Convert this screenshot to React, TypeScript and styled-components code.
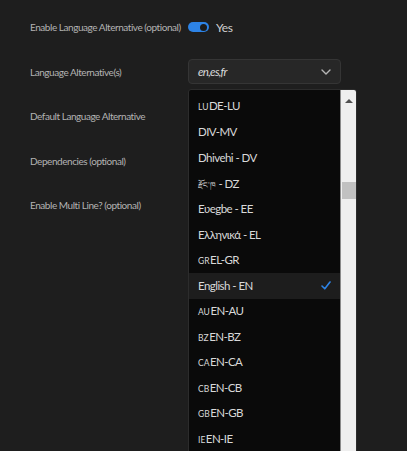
import React from "react";
import styled, { createGlobalStyle } from "styled-components";

const Global = createGlobalStyle`
  html, body { margin: 0; padding: 0; background: #1e1e1e; }
  body { font-family: "Lato", "Noto Sans", sans-serif; width: 407px; height: 451px; overflow: hidden; }
`;

const Page = styled.div`
  position: relative;
  width: 407px;
  height: 451px;
  background: #1e1e1e;
  padding: 5px 0 0 30px;
  box-sizing: border-box;
`;

const Row = styled.div`
  display: grid;
  grid-template-columns: 158px 153px;
  align-items: center;
  height: 44.5px;
`;

const Label = styled.div`
  font-size: 10px;
  color: #b3b3b3;
  letter-spacing: -0.45px;
  white-space: nowrap;
`;

const ToggleWrap = styled.div`
  display: flex;
  align-items: center;
  gap: 7px;
`;

const Track = styled.div`
  width: 21px;
  height: 10px;
  border-radius: 5px;
  background: #2d83e6;
  display: flex;
  align-items: center;
  justify-content: flex-end;
  padding: 0 2px;
  box-sizing: border-box;
`;

const Knob = styled.div`
  width: 7px;
  height: 7px;
  border-radius: 50%;
  background: #1b1b1b;
`;

const ToggleText = styled.span`
  font-size: 12px;
  color: #cfcfcf;
  letter-spacing: -0.4px;
`;

const Select = styled.div`
  height: 25px;
  box-sizing: border-box;
  border: 1px solid #353535;
  background: #272727;
  border-radius: 4px;
  display: flex;
  align-items: center;
  justify-content: space-between;
  padding: 0 9px 0 9px;
`;

const SelectValue = styled.span`
  font-size: 11.5px;
  font-style: italic;
  color: #dcdcdc;
  letter-spacing: -0.7px;
`;

const Menu = styled.div`
  position: absolute;
  left: 188px;
  top: 89px;
  width: 169px;
  height: 380px;
  background: #0a0a0a;
  border: 1px solid #2c2c2c;
  border-radius: 3px 3px 0 0;
  box-sizing: border-box;
  display: flex;
  overflow: hidden;
`;

const List = styled.div`
  flex: 1;
  padding-top: 4px;
`;

const Item = styled.div<{ $active?: boolean }>`
  height: 25.6px;
  display: flex;
  align-items: center;
  justify-content: space-between;
  padding: 0 9px 0 9px;
  background: ${(p) => (p.$active ? "#1d1d1d" : "transparent")};
  font-size: 11.5px;
  line-height: 16px;
  color: #d9d9d9;
  letter-spacing: -0.55px;
  white-space: nowrap;
  overflow: hidden;
`;

const Prefix = styled.span`
  font-size: 8.5px;
  letter-spacing: 0;
  margin-right: 0.5px;
`;

const Script = styled.span`
  font-size: 8px;
  line-height: 10px;
  letter-spacing: 0;
`;

const Scrollbar = styled.div`
  width: 15px;
  background: #efefef;
  border-left: 1px solid #8a8a8a;
  display: flex;
  flex-direction: column;
  align-items: center;
`;

const ArrowUp = styled.div`
  margin-top: 9px;
  width: 0;
  height: 0;
  border-left: 4px solid transparent;
  border-right: 4px solid transparent;
  border-bottom: 4px solid #505050;
`;

const Thumb = styled.div`
  margin-top: 79px;
  width: 14px;
  height: 17px;
  background: #c1c1c1;
`;

const items: { pre?: string; script?: string; text: string; active?: boolean }[] = [
  { pre: "LU", text: "DE-LU" },
  { text: "DIV-MV" },
  { text: "Dhivehi - DV" },
  { script: "རྫོང་ཁ", text: " - DZ" },
  { text: "Eʋegbe - EE" },
  { text: "Ελληνικά - EL" },
  { pre: "GR", text: "EL-GR" },
  { text: "English - EN", active: true },
  { pre: "AU", text: "EN-AU" },
  { pre: "BZ", text: "EN-BZ" },
  { pre: "CA", text: "EN-CA" },
  { pre: "CB", text: "EN-CB" },
  { pre: "GB", text: "EN-GB" },
  { pre: "IE", text: "EN-IE" },
];

const Chevron = () => (
  <svg width="10" height="6" viewBox="0 0 10 6">
    <path d="M1 1 L5 5 L9 1" fill="none" stroke="#b5b5b5" strokeWidth="1.4" strokeLinecap="round" strokeLinejoin="round" />
  </svg>
);

const Check = () => (
  <svg width="10" height="9" viewBox="0 0 10 9">
    <path d="M1 5 L3.8 7.8 L9 1" fill="none" stroke="#2d83e6" strokeWidth="1.6" strokeLinecap="round" strokeLinejoin="round" />
  </svg>
);

export default function App() {
  return (
    <Page>
      <Global />
      <Row>
        <Label>Enable Language Alternative (optional)</Label>
        <ToggleWrap>
          <Track>
            <Knob />
          </Track>
          <ToggleText>Yes</ToggleText>
        </ToggleWrap>
      </Row>
      <Row>
        <Label>Language Alternative(s)</Label>
        <Select>
          <SelectValue>en,es,fr</SelectValue>
          <Chevron />
        </Select>
      </Row>
      <Row>
        <Label>Default Language Alternative</Label>
      </Row>
      <Row>
        <Label>Dependencies (optional)</Label>
      </Row>
      <Row>
        <Label>Enable Multi Line? (optional)</Label>
      </Row>
      <Menu>
        <List>
          {items.map((it, i) => (
            <Item key={i} $active={it.active}>
              <span>
                {it.pre && <Prefix>{it.pre}</Prefix>}
                {it.script && <Script>{it.script}</Script>}
                {it.text}
              </span>
              {it.active && <Check />}
            </Item>
          ))}
        </List>
        <Scrollbar>
          <ArrowUp />
          <Thumb />
        </Scrollbar>
      </Menu>
    </Page>
  );
}
